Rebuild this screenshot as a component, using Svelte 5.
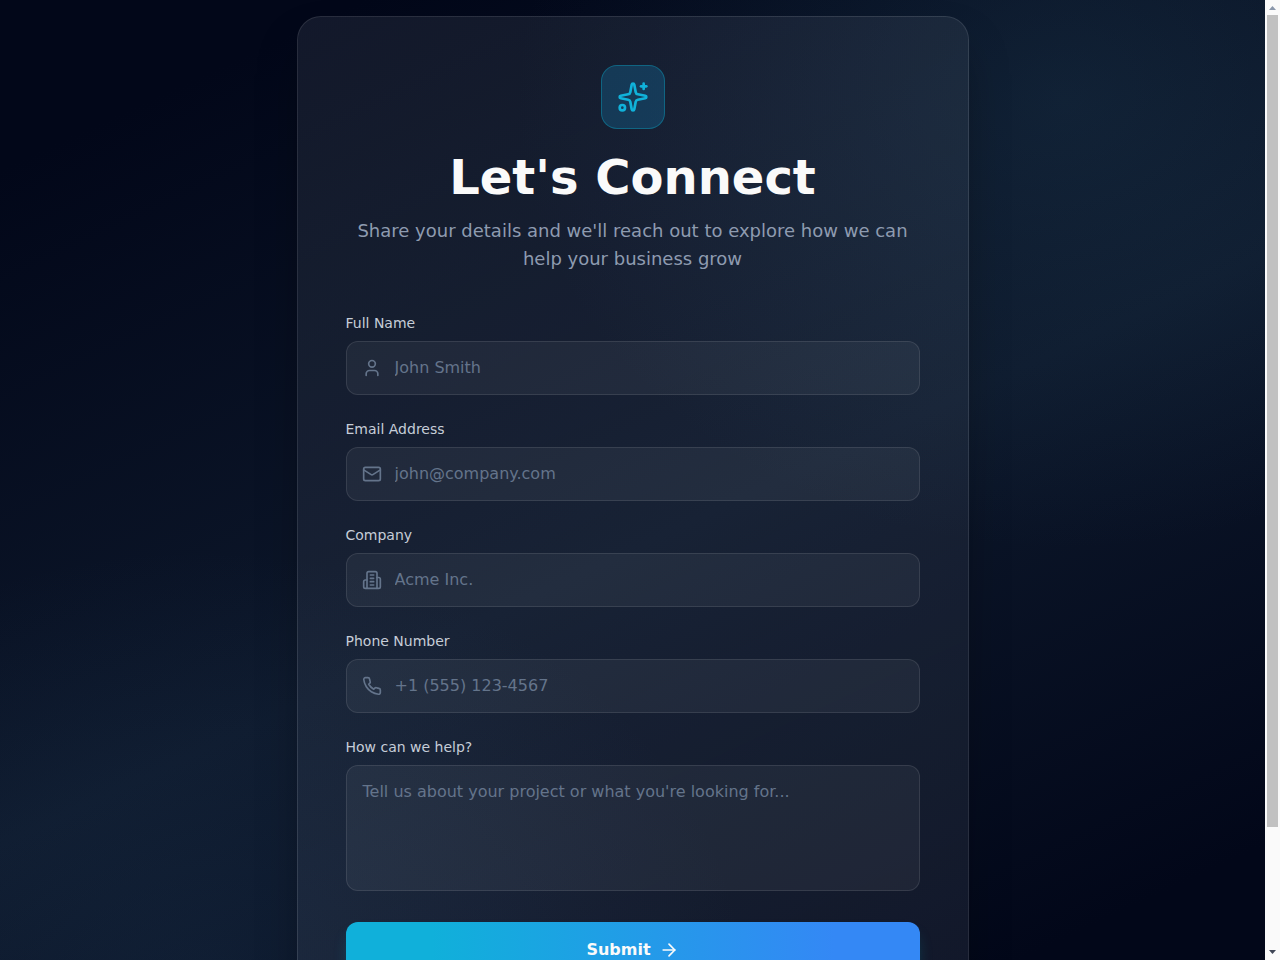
<script lang="ts">
	const fields = [
		{ id: 'name', label: 'Full Name', type: 'text', placeholder: 'John Smith', icon: 'user' },
		{ id: 'email', label: 'Email Address', type: 'email', placeholder: 'john@company.com', icon: 'mail' },
		{ id: 'company', label: 'Company', type: 'text', placeholder: 'Acme Inc.', icon: 'building' },
		{ id: 'phone', label: 'Phone Number', type: 'tel', placeholder: '+1 (555) 123-4567', icon: 'phone' }
	];

	let values = $state<Record<string, string>>({ name: '', email: '', company: '', phone: '' });
	let message = $state('');

	// scroll position and sizes drive the thumb of the side scrollbar
	let scroller: HTMLDivElement;
	let scrollTop = $state(0);
	let viewHeight = $state(1);
	let pageHeight = $state(1);

	let thumbSize = $derived(Math.min(100, (viewHeight / pageHeight) * 100));
	let thumbTop = $derived((scrollTop / pageHeight) * 100);

	function handleSubmit(e: SubmitEvent) {
		e.preventDefault();
	}
</script>

<div class="window">
	<div
		class="scroller"
		bind:this={scroller}
		bind:clientHeight={viewHeight}
		onscroll={() => (scrollTop = scroller.scrollTop)}
	>
		<main class="page" bind:clientHeight={pageHeight}>
			<div class="glow glow-top"></div>
			<div class="glow glow-bottom"></div>

			<section class="card">
				<header>
					<div class="badge">
						<svg class="sparkles" viewBox="0 0 24 24" aria-hidden="true">
							<path d="M11.017 2.814a1 1 0 0 1 1.966 0l1.051 5.558a2 2 0 0 0 1.594 1.594l5.558 1.051a1 1 0 0 1 0 1.966l-5.558 1.051a2 2 0 0 0-1.594 1.594l-1.051 5.558a1 1 0 0 1-1.966 0l-1.051-5.558a2 2 0 0 0-1.594-1.594l-5.558-1.051a1 1 0 0 1 0-1.966l5.558-1.051a2 2 0 0 0 1.594-1.594z" />
							<path d="M20 2v4" />
							<path d="M22 4h-4" />
							<circle cx="4" cy="20" r="2" />
						</svg>
					</div>
					<h1>Let's Connect</h1>
					<p>Share your details and we'll reach out to explore how we can help your business grow</p>
				</header>

				<form onsubmit={handleSubmit}>
					{#each fields as f}
						<div class="field">
							<label for={f.id}>{f.label}</label>
							<div class="control">
								<svg class="icon" viewBox="0 0 24 24" aria-hidden="true">
									{#if f.icon === 'user'}
										<path d="M19 21v-2a4 4 0 0 0-4-4H9a4 4 0 0 0-4 4v2" />
										<circle cx="12" cy="7" r="4" />
									{:else if f.icon === 'mail'}
										<path d="m22 7-8.991 5.727a2 2 0 0 1-2.009 0L2 7" />
										<rect x="2" y="4" width="20" height="16" rx="2" />
									{:else if f.icon === 'building'}
										<path d="M6 22V4a2 2 0 0 1 2-2h8a2 2 0 0 1 2 2v18Z" />
										<path d="M6 12H4a2 2 0 0 0-2 2v6a2 2 0 0 0 2 2h2" />
										<path d="M18 9h2a2 2 0 0 1 2 2v9a2 2 0 0 1-2 2h-2" />
										<path d="M10 6h4M10 10h4M10 14h4M10 18h4" />
									{:else}
										<path d="M22 16.92v3a2 2 0 0 1-2.18 2 19.79 19.79 0 0 1-8.63-3.07 19.5 19.5 0 0 1-6-6 19.79 19.79 0 0 1-3.07-8.67A2 2 0 0 1 4.11 2h3a2 2 0 0 1 2 1.72 12.84 12.84 0 0 0 .7 2.81 2 2 0 0 1-.45 2.11L8.09 9.91a16 16 0 0 0 6 6l1.27-1.27a2 2 0 0 1 2.11-.45 12.84 12.84 0 0 0 2.81.7A2 2 0 0 1 22 16.92z" />
									{/if}
								</svg>
								<input id={f.id} type={f.type} placeholder={f.placeholder} bind:value={values[f.id]} />
							</div>
						</div>
					{/each}

					<div class="field">
						<label for="message">How can we help?</label>
						<textarea
							id="message"
							rows="4"
							placeholder="Tell us about your project or what you're looking for..."
							bind:value={message}
						></textarea>
					</div>

					<button type="submit">
						Submit
						<svg class="arrow" viewBox="0 0 24 24" aria-hidden="true">
							<path d="M5 12h14" />
							<path d="m12 5 7 7-7 7" />
						</svg>
					</button>
				</form>
			</section>
		</main>
	</div>

	<div class="scrollbar" aria-hidden="true">
		<svg class="step up" viewBox="0 0 15 15"><path d="M4 10h7L7.5 6z" /></svg>
		<div class="track">
			<div class="thumb" style="height: {thumbSize}%; top: {thumbTop}%"></div>
		</div>
		<svg class="step" viewBox="0 0 15 15"><path d="M4 5h7L7.5 9z" /></svg>
	</div>
</div>

<style>
	:global(body) {
		margin: 0;
		background: #020617;
	}
	.window {
		display: grid;
		grid-template-columns: minmax(0, 1fr) 15px;
		height: 100vh;
	}
	.scroller {
		overflow-y: auto;
		scrollbar-width: none;
	}
	.page {
		position: relative;
		overflow: hidden;
		box-sizing: border-box;
		min-height: 100%;
		padding: 16px;
		background: linear-gradient(155deg, #020719 10%, #0d182b 50%, #020719 85%);
		color: #fafafa;
		font-family: 'DejaVu Sans', sans-serif;
	}
	.glow {
		position: absolute;
		width: 1100px;
		height: 900px;
		border-radius: 50%;
	}
	.glow-top {
		top: -350px;
		right: -350px;
		background: radial-gradient(closest-side, rgba(45, 90, 115, 0.22), transparent);
	}
	.glow-bottom {
		bottom: -350px;
		left: -350px;
		background: radial-gradient(closest-side, rgba(50, 90, 125, 0.18), transparent);
	}
	.card {
		position: relative;
		box-sizing: border-box;
		max-width: 672px;
		margin: 0 auto;
		padding: 48px 48px 104px;
		border: 1px solid rgba(255, 255, 255, 0.1);
		border-radius: 24px;
		background: linear-gradient(155deg, rgba(225, 235, 255, 0.08), rgba(225, 235, 255, 0.05) 50%, rgba(225, 235, 255, 0.08));
		box-shadow: 0 25px 50px -12px rgba(0, 0, 0, 0.4);
	}
	header {
		margin-bottom: 40px;
		text-align: center;
	}
	.badge {
		display: flex;
		align-items: center;
		justify-content: center;
		box-sizing: border-box;
		width: 64px;
		height: 64px;
		margin: 0 auto 24px;
		border: 1px solid rgba(6, 182, 212, 0.35);
		border-radius: 16px;
		background: rgba(20, 150, 215, 0.23);
	}
	svg {
		fill: none;
		stroke: currentColor;
		stroke-width: 2;
		stroke-linecap: round;
		stroke-linejoin: round;
	}
	.sparkles {
		width: 32px;
		height: 32px;
		color: #10b2da;
	}
	h1 {
		margin: 0 0 16px;
		font-size: 48px;
		line-height: 48px;
		font-weight: 700;
	}
	p {
		margin: 0;
		color: #8e9bb0;
		font-size: 18px;
		line-height: 28px;
	}
	form {
		display: flex;
		flex-direction: column;
		gap: 24px;
	}
	label {
		display: block;
		margin-bottom: 8px;
		color: #c6cdd8;
		font-size: 14px;
		line-height: 20px;
	}
	.control {
		position: relative;
	}
	.icon {
		position: absolute;
		top: 17px;
		left: 16px;
		width: 20px;
		height: 20px;
		color: #64748b;
	}
	input,
	textarea {
		display: block;
		box-sizing: border-box;
		width: 100%;
		padding: 14px 16px;
		border: 1px solid rgba(255, 255, 255, 0.1);
		border-radius: 12px;
		background: rgba(255, 255, 255, 0.05);
		color: #fafafa;
		font-family: inherit;
		font-size: 16px;
		line-height: 24px;
		outline: none;
	}
	input {
		height: 54px;
		padding: 13px 16px 15px 48px;
	}
	textarea {
		margin-bottom: 7px;
		resize: none;
	}
	input::placeholder,
	textarea::placeholder {
		color: #64748b;
	}
	input:focus,
	textarea:focus {
		border-color: rgba(6, 182, 212, 0.5);
	}
	button {
		display: flex;
		align-items: center;
		justify-content: center;
		gap: 8px;
		padding: 16px;
		border: 0;
		border-radius: 12px;
		background: linear-gradient(to right, #10b0da 15%, #3488f5 85%);
		box-shadow: 0 10px 15px -3px rgba(6, 182, 212, 0.25);
		color: #fafafa;
		font-family: inherit;
		font-size: 16px;
		line-height: 24px;
		font-weight: 600;
		cursor: pointer;
	}
	.arrow {
		width: 20px;
		height: 20px;
	}
	.scrollbar {
		display: flex;
		flex-direction: column;
		background: #fafafa;
	}
	.step {
		flex: none;
		width: 15px;
		height: 15px;
		fill: #3f4656;
		stroke: none;
	}
	.up {
		fill: #8a97ab;
	}
	.track {
		position: relative;
		flex: 1;
		margin: 0 2px;
	}
	.thumb {
		position: absolute;
		width: 100%;
		background: #c1c1c1;
	}
</style>
